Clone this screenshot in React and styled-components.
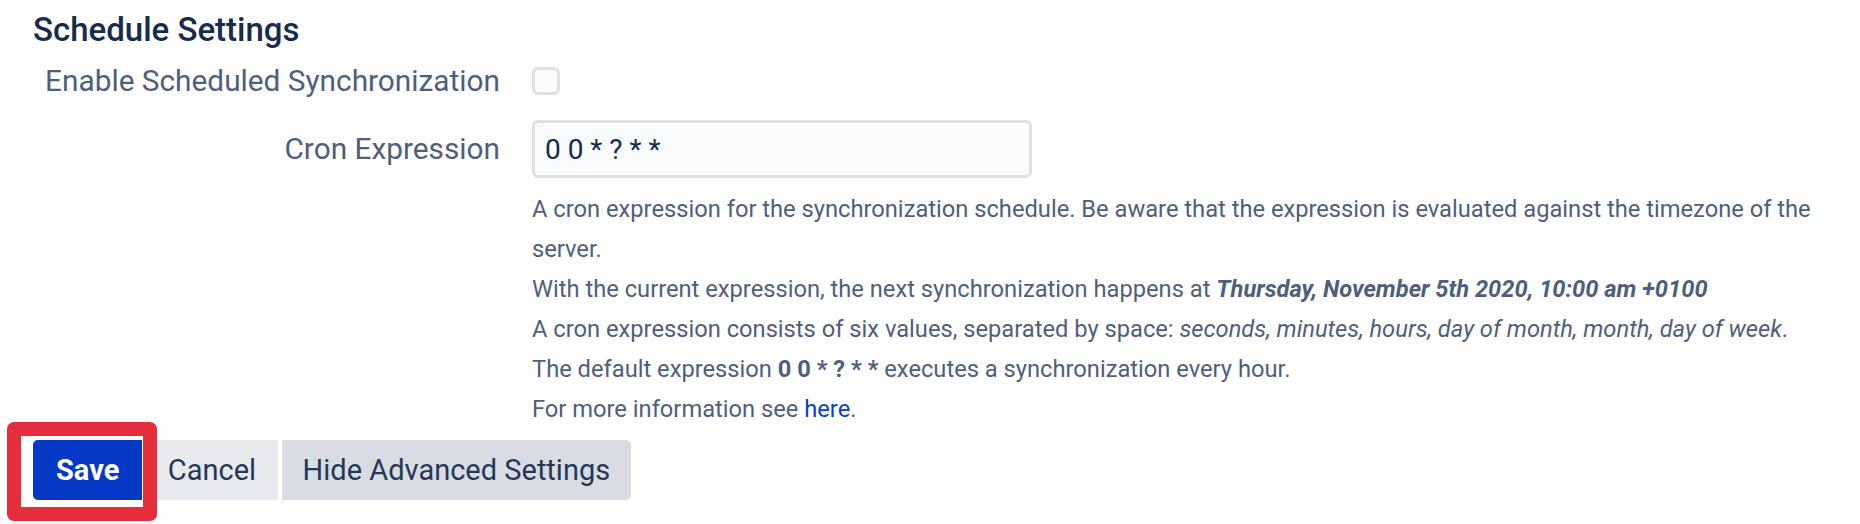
import React from "react";
import styled, { createGlobalStyle } from "styled-components";

const GlobalStyle = createGlobalStyle`
  html, body {
    margin: 0;
    min-height: 524px;
    background: #ffffff;
    font-family: Roboto, "Liberation Sans", Arial, sans-serif;
    color: #505f79;
  }
`;

const Page = styled.div`
  position: relative;
  box-sizing: border-box;
  min-height: 524px;
  padding: 10px 0 0 33px;
`;

const Heading = styled.h2`
  margin: 0;
  font-size: 33px;
  line-height: 40px;
  font-weight: 500;
  color: #172b4d;
`;

const Form = styled.div`
  display: grid;
  grid-template-columns: 467px auto;
  column-gap: 32px;
  margin-top: 10px;
`;

const Label = styled.label`
  display: flex;
  align-items: center;
  justify-content: flex-end;
  height: ${(p) => p.$height}px;
  margin-top: ${(p) => p.$top || 0}px;
  font-size: 29.8px;
  line-height: 42px;
  color: #505f79;
  white-space: nowrap;
`;

const Control = styled.div`
  display: flex;
  flex-direction: column;
  justify-content: center;
  min-height: ${(p) => p.$height}px;
  margin-top: ${(p) => p.$top || 0}px;
`;

const Checkbox = styled.span`
  display: block;
  width: 28px;
  height: 28px;
  box-sizing: border-box;
  border: 3.5px solid #dfe1e6;
  border-radius: 6px;
  background: #fafbfc;
`;

const TextInput = styled.input`
  width: 500px;
  height: 58px;
  box-sizing: border-box;
  border: 3px solid #dfe1e6;
  border-radius: 6px;
  background: #fafbfc;
  padding: 0 10px;
  font-family: Roboto, "Liberation Sans", Arial, sans-serif;
  font-size: 28px;
  color: #172b4d;
  outline: none;
`;

const Description = styled.div`
  margin-top: 11px;
  max-width: 1305px;
  font-size: 23.7px;
  line-height: 40px;
  color: #505f79;
`;

const Line = styled.div``;

const Strong = styled.b`
  font-weight: 700;
  font-style: ${(p) => (p.$italic ? "italic" : "normal")};
`;

const Em = styled.i`
  font-style: italic;
`;

const Link = styled.a`
  color: #0b3fc9;
  text-decoration: none;
`;

const Buttons = styled.div`
  display: flex;
  gap: 3.5px;
  margin-top: 11px;
`;

const Button = styled.button`
  height: 60px;
  padding: 0 ${(p) => p.$pad}px;
  border: none;
  margin: 0;
  font-family: Roboto, "Liberation Sans", Arial, sans-serif;
  font-size: 29px;
  font-weight: ${(p) => (p.$primary ? 700 : 400)};
  color: ${(p) => (p.$primary ? "#ffffff" : "#253858")};
  background: ${(p) => p.$bg};
  border-radius: ${(p) => p.$radius};
  cursor: pointer;
`;

const Highlight = styled.div`
  position: absolute;
  left: 7px;
  top: 422px;
  width: 150px;
  height: 99px;
  box-sizing: border-box;
  border: 14px solid #e42e3b;
  border-radius: 7px;
  pointer-events: none;
  z-index: 2;
`;

export default function App() {
  return (
    <Page>
      <GlobalStyle />
      <Heading>Schedule Settings</Heading>
      <Form>
        <Label $height={42}>Enable Scheduled Synchronization</Label>
        <Control $height={42}>
          <Checkbox />
        </Control>

        <Label $height={58} $top={18}>Cron Expression</Label>
        <Control $top={18}>
          <TextInput defaultValue="0 0 * ? * *" />
          <Description>
            <Line>
              A cron expression for the synchronization schedule. Be aware that the expression is evaluated
              against the timezone of the server.
            </Line>
            <Line>
              With the current expression, the next synchronization happens at{" "}
              <Strong $italic>Thursday, November 5th 2020, 10:00 am +0100</Strong>
            </Line>
            <Line>
              A cron expression consists of six values, separated by space:{" "}
              <Em>seconds, minutes, hours, day of month, month, day of week</Em>.
            </Line>
            <Line>
              The default expression <Strong>0 0 * ? * *</Strong> executes a synchronization every hour.
            </Line>
            <Line>
              For more information see <Link href="#">here</Link>.
            </Line>
          </Description>
        </Control>
      </Form>
      <Buttons>
        <Button $primary $bg="#0538c4" $pad={23} $radius="5px 0 0 5px">Save</Button>
        <Button $bg="#e9eaee" $pad={22} $radius="0">Cancel</Button>
        <Button $bg="#d9dce3" $pad={21} $radius="0 5px 5px 0">Hide Advanced Settings</Button>
      </Buttons>
      <Highlight />
    </Page>
  );
}
